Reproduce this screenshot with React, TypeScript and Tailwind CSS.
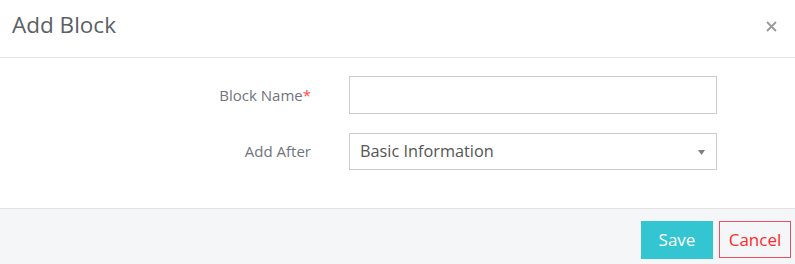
import React from 'react';

export default function App() {
  return (
    <div className="w-[795px] h-[264px] bg-white font-['Open_Sans',sans-serif] overflow-hidden">
      {/* Header */}
      <div className="h-[58px] flex items-center justify-between pl-3 pr-[18px] border-b border-[#e5e5e5]">
        <h2 className="text-[22.5px] leading-none text-[#5b5f66] -mt-[7px]">Add Block</h2>
        <button className="text-[#9a9a9a] -mt-[5px]">
          <svg width="11" height="11" viewBox="0 0 11 11" fill="none" stroke="currentColor" strokeWidth="1.8">
            <path d="M1 1l9 9M10 1l-9 9" />
          </svg>
        </button>
      </div>

      {/* Body */}
      <div className="h-[151px] pt-[18px] flex flex-col gap-[19px] border-b border-[#e3e3e3]">
        <div className="flex items-center">
          <label className="w-[311px] text-right text-[15px] text-[#70757d]">
            Block Name<span className="text-[#ff4a4a]">*</span>
          </label>
          <input className="ml-[38px] w-[368px] h-[38px] border border-[#cccccc] px-2 outline-none" />
        </div>
        <div className="flex items-center">
          <label className="w-[311px] text-right text-[15px] text-[#70757d]">Add After</label>
          <div className="ml-[38px] w-[368px] h-[37px] border border-[#cccccc] flex items-center justify-between pl-[10px] pr-[11px]">
            <span className="text-[16.3px] text-[#555]">Basic Information</span>
            <svg width="7" height="5" viewBox="0 0 7 5" className="mt-[2px]">
              <path d="M0 0h7L3.5 5z" fill="#808080" />
            </svg>
          </div>
        </div>
      </div>

      {/* Footer */}
      <div className="h-[55px] bg-[#f5f6f8] flex justify-end items-start pt-[12px] pr-[4px] gap-[6px]">
        <button className="w-[72px] h-[38px] bg-[#33c5d2] text-white text-[17px]">Save</button>
        <button className="w-[72px] h-[37px] border border-[#e6506a] text-[#ff2a2a] text-[17px] bg-transparent">
          Cancel
        </button>
      </div>
    </div>
  );
}
